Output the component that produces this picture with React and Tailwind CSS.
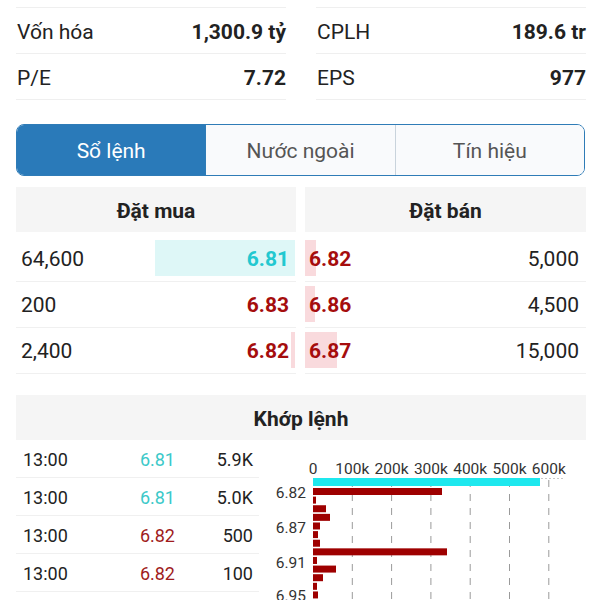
import React from 'react';

const stats = [
  [
    { label: 'Vốn hóa', value: '1,300.9 tỷ' },
    { label: 'P/E', value: '7.72' },
  ],
  [
    { label: 'CPLH', value: '189.6 tr' },
    { label: 'EPS', value: '977' },
  ],
];

const bids = [
  { qty: '64,600', price: '6.81', up: true, bar: 140 },
  { qty: '200', price: '6.83', up: false, bar: 0 },
  { qty: '2,400', price: '6.82', up: false, bar: 4 },
];

const asks = [
  { price: '6.82', qty: '5,000', bar: 11 },
  { price: '6.86', qty: '4,500', bar: 10 },
  { price: '6.87', qty: '15,000', bar: 32 },
];

const trades = [
  { time: '13:00', price: '6.81', up: true, vol: '5.9K' },
  { time: '13:00', price: '6.81', up: true, vol: '5.0K' },
  { time: '13:00', price: '6.82', up: false, vol: '500' },
  { time: '13:00', price: '6.82', up: false, vol: '100' },
];

// bar widths in px from x=0 of the chart
const redBars = [129, 3, 13, 17, 7, 5, 7, 134, 4, 23, 10, 4, 5];
const yLabels = [
  { text: '6.82', y: 52 },
  { text: '6.87', y: 87 },
  { text: '6.91', y: 122 },
  { text: '6.95', y: 155 },
];

const X0 = 54;
const STEP = 39.3;

const VolumeChart = () => (
  <svg width="327" height="160" className="block shrink-0">
    {['0', '100k', '200k', '300k', '400k', '500k', '600k'].map((t, i) => (
      <text
        key={t}
        x={X0 + i * STEP}
        y="34"
        textAnchor="middle"
        fontSize="15.5"
        fill="#333"
        fontFamily="Roboto, sans-serif"
      >
        {t}
      </text>
    ))}
    <line x1={X0} y1="38.5" x2="304" y2="38.5" stroke="#c8c8c8" strokeDasharray="2 2" />
    {[1, 2, 3, 4, 5, 6].map((i) => (
      <line
        key={i}
        x1={X0 + i * STEP}
        y1="40"
        x2={X0 + i * STEP}
        y2="160"
        stroke="#9a9a9a"
        strokeDasharray="7 7"
      />
    ))}
    <rect x={X0} y="38" width="227" height="8" fill="#1ee8ee" />
    {redBars.map((w, i) => (
      <rect key={i} x={X0} y={48 + i * 8.62} width={w} height="7" fill="#9e0000" />
    ))}
    {yLabels.map((l) => (
      <text
        key={l.text}
        x="47"
        y={l.y + 5.5}
        textAnchor="end"
        fontSize="15.5"
        fill="#333"
        fontFamily="Roboto, sans-serif"
      >
        {l.text}
      </text>
    ))}
  </svg>
);

const App = () => {
  return (
    <div
      className="w-[600px] h-[600px] overflow-hidden bg-white pl-4 pr-[14px] pt-[7px] text-[#222]"
      style={{ fontFamily: 'Roboto, "Noto Sans", sans-serif' }}
    >
      {/* stats */}
      <div className="flex gap-[30px]">
        {stats.map((col, i) => (
          <div key={i} className="flex-1 border-t border-[#efefef]">
            {col.map((s) => (
              <div
                key={s.label}
                className="h-[46px] flex items-center justify-between border-b border-[#efefef] text-[21px] pt-1"
              >
                <span className="pl-px">{s.label}</span>
                <span className="font-bold">{s.value}</span>
              </div>
            ))}
          </div>
        ))}
      </div>

      {/* tabs */}
      <div className="mt-6 mr-px h-[52px] flex rounded-lg border-[1.5px] border-[#2f7cb7] overflow-hidden text-[21px]">
        <div className="flex-1 flex items-center justify-center pt-1 bg-[#2a7ab9] text-white">Sổ lệnh</div>
        <div className="flex-1 flex items-center justify-center pt-1 bg-[#f9fafc] text-[#555] border-l border-[#2f7cb7]">
          Nước ngoài
        </div>
        <div className="flex-1 flex items-center justify-center pt-1 bg-[#f9fafc] text-[#555] border-l border-[#c9d3dc]">
          Tín hiệu
        </div>
      </div>

      {/* order book */}
      <div className="mt-[11px] flex gap-[9px] text-[21px]">
        <div className="w-[280px]">
          <div className="h-[45px] pt-1 bg-[#f5f5f5] flex items-center justify-center font-bold">Đặt mua</div>
          <div className="mt-1">
            {bids.map((b, i) => (
              <div key={i} className="h-[46px] pt-1 pb-[5px] border-b border-[#f0f0f0]">
                <div className="relative h-9 flex items-center justify-between pl-[5px] pr-[7px] pt-1">
                  {b.bar > 0 && (
                    <div
                      className={`absolute right-px top-0 bottom-0 ${b.up ? 'bg-[#def7f7]' : 'bg-[#f9dadd]'}`}
                      style={{ width: b.bar }}
                    />
                  )}
                  <span className="relative">{b.qty}</span>
                  <span className={`relative font-bold ${b.up ? 'text-[#22c8d0]' : 'text-[#a50d0d]'}`}>
                    {b.price}
                  </span>
                </div>
              </div>
            ))}
          </div>
        </div>
        <div className="flex-1">
          <div className="h-[45px] pt-1 bg-[#f5f5f5] flex items-center justify-center font-bold">Đặt bán</div>
          <div className="mt-1">
            {asks.map((a, i) => (
              <div key={i} className="h-[46px] pt-1 pb-[5px] border-b border-[#f0f0f0]">
                <div className="relative h-9 flex items-center justify-between pl-1 pr-[7px] pt-1">
                  <div className="absolute left-0 top-0 bottom-0 bg-[#f9dadd]" style={{ width: a.bar }} />
                  <span className="relative font-bold text-[#a50d0d]">{a.price}</span>
                  <span className="relative">{a.qty}</span>
                </div>
              </div>
            ))}
          </div>
        </div>
      </div>

      {/* matched orders */}
      <div className="mt-[21px] h-[45px] pt-1 bg-[#f5f5f5] flex items-center justify-center font-bold text-[21px]">
        Khớp lệnh
      </div>
      <div className="flex">
        <div className="w-[243px] text-[18px]">
          {trades.map((t, i) => (
            <div key={i} className="h-[38px] pt-0.5 flex items-center border-b border-[#f0f0f0] pl-[7px] pr-[6px]">
              <span className="w-[100px]">{t.time}</span>
              <span className={`w-[52px] text-right ${t.up ? 'text-[#3cc9c9]' : 'text-[#a01c1c]'}`}>{t.price}</span>
              <span className="flex-1 text-right">{t.vol}</span>
            </div>
          ))}
        </div>
        <VolumeChart />
      </div>
    </div>
  );
};

export default App;
